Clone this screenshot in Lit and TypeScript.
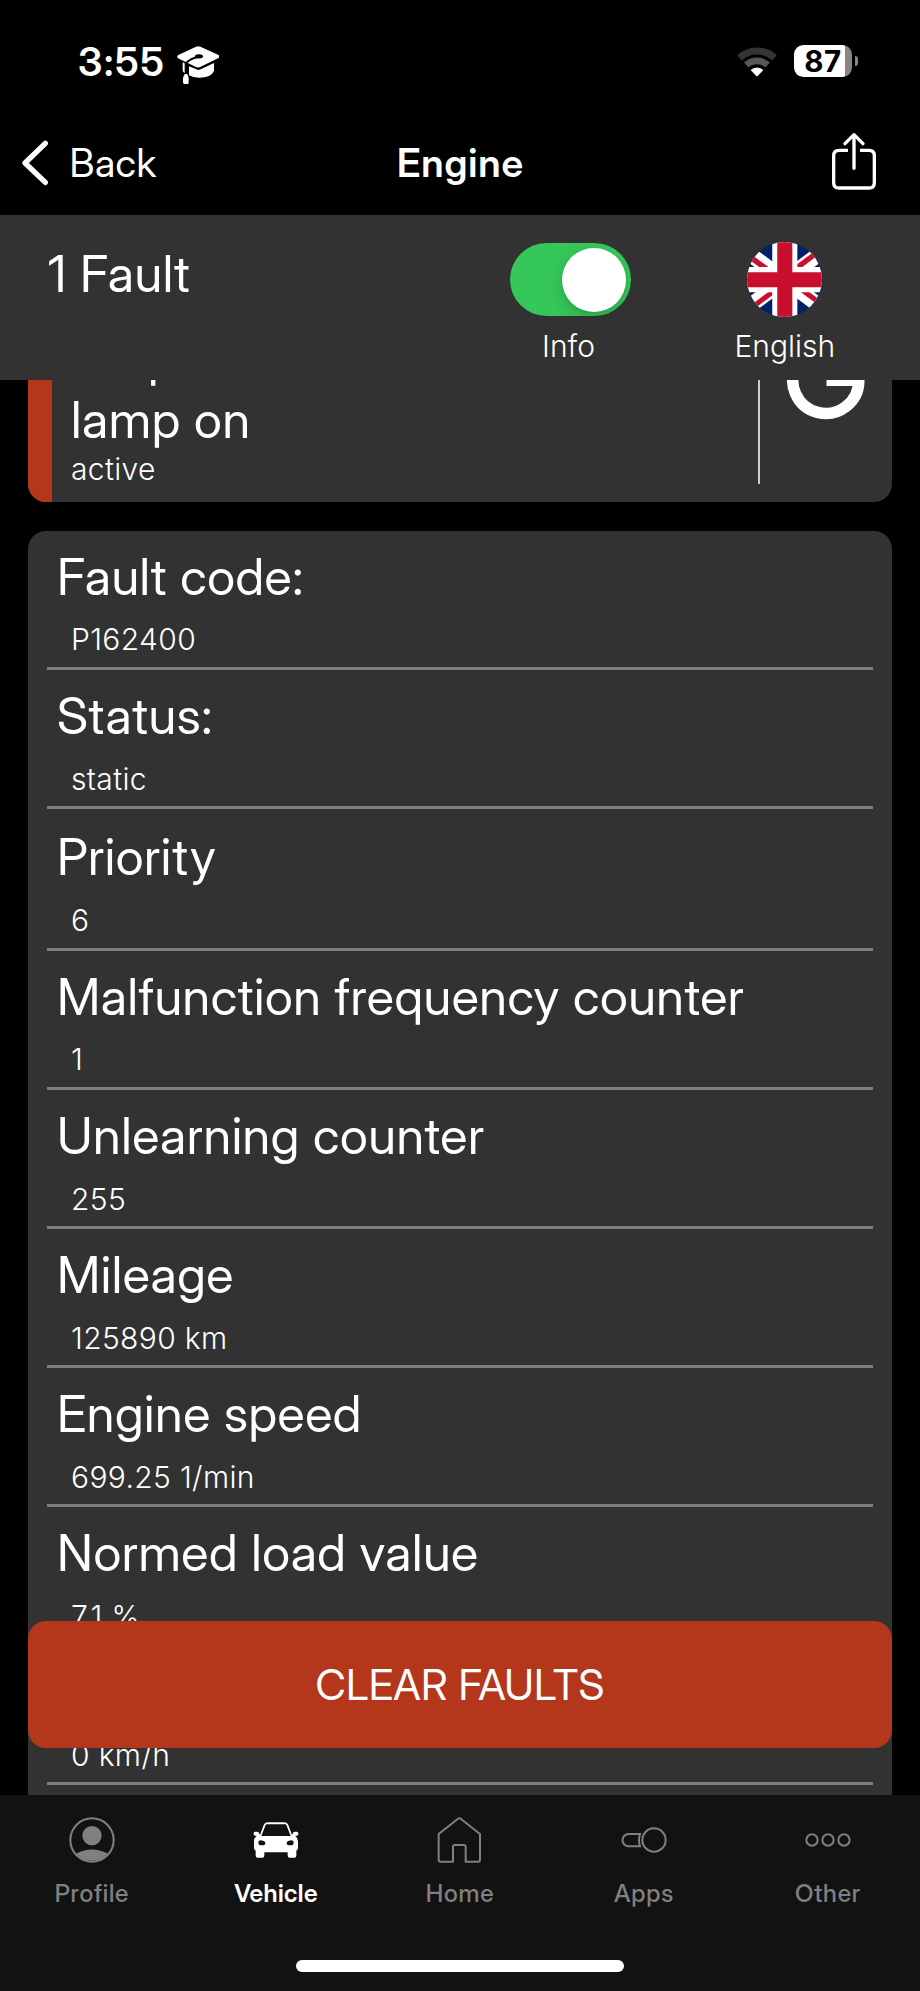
import { LitElement, html, svg, css } from 'lit';
import { customElement, property } from 'lit/decorators.js';
import { classMap } from 'lit/directives/class-map.js';

type TabName = 'Profile' | 'Vehicle' | 'Home' | 'Apps' | 'Other';

interface Detail {
  title: string;
  value: string;
  loose?: boolean;
}

const DETAILS: Detail[] = [
  { title: 'Fault code:', value: 'P162400' },
  { title: 'Status:', value: 'static' },
  { title: 'Priority', value: '6', loose: true },
  { title: 'Malfunction frequency counter', value: '1' },
  { title: 'Unlearning counter', value: '255' },
  { title: 'Mileage', value: '125890 km' },
  { title: 'Engine speed', value: '699.25 1/min' },
  { title: 'Normed load value', value: '7.1 %' },
  { title: '', value: '0 km/h' },
];

const TABS: TabName[] = ['Profile', 'Vehicle', 'Home', 'Apps', 'Other'];

const TAB_ICONS = {
  Profile: svg`
    <circle r="65" fill="none" stroke="currentColor" stroke-width="6"/>
    <circle cy="-13" r="29" fill="currentColor"/>
    <path d="M-48 42C-22 24 22 24 48 42C35 56 18 62 0 62S-35 56 -48 42Z" fill="currentColor"/>`,
  Vehicle: svg`
    <path fill="currentColor" fill-rule="evenodd" d="M-48 -15L-37 -45Q-34 -53 -26 -53H26Q34 -53 37 -45L48 -15Q51 -25 57 -25H62Q67 -25 67 -20V-17Q67 -13 62 -13H58Q66 -6 66 4V24Q66 29 61 32V47Q61 53 55 53H41Q35 53 35 47V37H-35V47Q-35 53 -41 53H-55Q-61 53 -61 47V32Q-66 29 -66 24V4Q-66 -6 -58 -13H-62Q-67 -13 -67 -17V-20Q-67 -25 -62 -25H-57Q-51 -25 -48 -15ZM-27 -47Q-31 -47 -32 -43L-44 -12H44L32 -43Q31 -47 27 -47ZM-53 9Q-53 16 -46 16H-38Q-32 16 -32 10Q-32 3 -39 2L-46 1Q-53 1 -53 9ZM53 9Q53 1 46 1L39 2Q32 3 32 10Q32 16 38 16H46Q53 16 53 9Z"/>`,
  Home: svg`
    <path transform="translate(-2 0)" fill="none" stroke="currentColor" stroke-width="6" stroke-linejoin="round" d="M-19 65H-56Q-62 65 -62 59V-18L-4 -64Q0 -67 4 -64L62 -18V59Q62 65 56 65H19V20Q19 15 14 15H-14Q-19 15 -19 20Z"/>`,
  Apps: svg`
    <g fill="none" stroke="currentColor" stroke-width="6">
      <circle cx="30" r="35"/>
      <path d="M-12 -18H-46A18.5 18.5 0 0 0 -46 19H-12Q-18 0 -12 -18Z"/>
    </g>`,
  Other: svg`
    <g fill="none" stroke="currentColor" stroke-width="6">
      <circle cx="-48" r="17"/><circle r="17"/><circle cx="48" r="17"/>
    </g>`,
};

@customElement('status-bar')
class StatusBar extends LitElement {
  static styles = css`
    :host { display: flex; height: 123px; justify-content: space-between; box-sizing: border-box; padding: 38px 62px 0 78px; }
    .left, .right { display: flex; align-items: flex-start; }
    .time { font-family: "Inter Display", Inter, sans-serif; font-weight: 600; font-size: 39.5px; line-height: 48px; letter-spacing: 1.9px; width: 98.7px; }
    .cap { width: 42.7px; height: 38.7px; margin-top: 7.5px; }
    .wifi { width: 40px; height: 30.7px; margin: 8px 17px 0 0; }
    .battery { margin-top: 6.7px; width: 58.7px; height: 32.3px; border-radius: 9.5px; background: linear-gradient(90deg, #fff 51px, #868686 51px); color: #000; font-weight: 700; font-size: 29.5px; line-height: 32.6px; letter-spacing: .4px; text-align: center; }
    .nub { width: 3.2px; height: 9.5px; border-radius: 0 5px 5px 0; background: #868686; margin: 18px 0 0 2.6px; }
  `;
  render() {
    return html`
      <div class="left">
        <span class="time">3:55</span>
        <svg class="cap" viewBox="0 0 128 116">
          <path fill="#fff" d="M57 2Q63 -1 70 2L123 26Q131 31 123 37L71 62Q64 66 57 63L6 38Q-4 33 4 27Z"/>
          <path fill="#fff" d="M36 61L58 70Q64 73 71 70L111 51V74Q104 94 66 95Q48 95 36 88ZM17 49L23 52V81Q17 78 17 72Z"/>
          <path fill="none" stroke="#000" stroke-width="6" d="M66 32Q40 37 27 51V90"/>
          <ellipse cx="66" cy="31" rx="12" ry="6.5"/>
          <path fill="#fff" d="M23 84H31L35 95V108Q35 116 27 116T18 108V95Z"/>
        </svg>
      </div>
      <div class="right">
        <svg class="wifi" viewBox="-60 -92 120 92">
          <path fill="none" stroke="#343434" stroke-width="21" d="M-52.5 -56.500A77 77 0 0 1 52.5 -56.500"/>
          <path fill="none" stroke="#575757" stroke-width="20" d="M-32 -35A47.500 47.500 0 0 1 32 -35"/>
          <path fill="#fff" d="M-19 -20A27.500 27.500 0 0 1 19 -20L3 -3Q0 0 -3 -3Z"/>
        </svg>
        <div class="battery">87</div>
        <div class="nub"></div>
      </div>
    `;
  }
}

@customElement('nav-bar')
class NavBar extends LitElement {
  static styles = css`
    :host { display: grid; grid-template-columns: 1fr auto 1fr; height: 92px; box-sizing: border-box; padding: 0 43px 0 20px; font-family: "Inter Display", Inter, sans-serif; font-size: 39px; line-height: 48px; }
    .back { display: flex; }
    .chevron { width: 30px; height: 48px; margin-top: 15.500px; }
    .label { margin: 16px 0 0 19.500px; letter-spacing: .5px; }
    .title { margin: 16px 0 0 24px; font-weight: 600; letter-spacing: .9px; }
    .share { justify-self: end; width: 46px; height: 60px; margin-top: 9px; }
  `;
  render() {
    return html`
      <div class="back">
        <svg class="chevron" viewBox="60 416 90 144"><path fill="none" stroke="#fff" stroke-width="16" stroke-linecap="round" stroke-linejoin="round" d="M136 429L75 488L136 546"/></svg>
        <span class="label">Back</span>
      </div>
      <span class="title">Engine</span>
      <svg class="share" viewBox="1111 396 138 180">
        <g fill="none" stroke="#fff" stroke-width="10">
          <path d="M1162 451H1135Q1119 451 1119 467V548Q1119 564 1135 564H1225Q1241 564 1241 548V467Q1241 451 1225 451H1198"/>
          <path stroke-linecap="round" stroke-linejoin="round" d="M1180 505V405M1153 431L1180 404L1207 431"/>
        </g>
      </svg>
    `;
  }
}

@customElement('fault-header')
class FaultHeader extends LitElement {
  static styles = css`
    :host { display: grid; grid-template-columns: 462px 121px 1fr; height: 165px; box-sizing: border-box; padding: 27px 0 0 48px; background: #323232; }
    .count { font-family: "Inter Display", Inter, sans-serif; font-size: 50.5px; line-height: 62px; letter-spacing: .55px; margin-top: 1px; }
    .switch { display: flex; justify-content: flex-end; box-sizing: border-box; height: 73.300px; border-radius: 37px; background: #35c759; padding: 5px; margin-top: 1px; overflow: hidden; }
    .knob { width: 64px; height: 64px; border-radius: 50%; background: #fff; box-shadow: 0 6px 16px rgba(0, 0, 0, .16), 0 2px 3px rgba(0, 0, 0, .06); }
    .caption { font-weight: 300; font-size: 30px; line-height: 36px; text-align: center; }
    .info { margin: 11.500px 4px 0 0; }
    .language { display: flex; flex-direction: column; align-items: center; width: 168px; margin-left: 69.800px; }
    .flag { width: 75.300px; height: 75.300px; border-radius: 50%; }
    .english { margin-top: 11px; }
  `;
  render() {
    return html`
      <div class="count">1 Fault</div>
      <div>
        <div class="switch"><div class="knob"></div></div>
        <div class="caption info">Info</div>
      </div>
      <div class="language">
        <svg class="flag" viewBox="80 0 480 480">
          <path fill="#012169" d="M0 0h640v480H0z"/>
          <path fill="#fff" d="m75 0 244 181L562 0h78v62L400 241l240 178v61h-80L320 301 81 480H0v-60l239-178L0 64V0z"/>
          <path fill="#c8102e" d="m424 281 216 159v40L369 281zm-184 20 6 35L54 480H0zM640 0v3L391 191l2-44L590 0zM0 0l239 176h-60L0 42z"/>
          <path fill="#fff" d="M241 0v480h160V0zM0 160v160h640V160z"/>
          <path fill="#c8102e" d="M0 193v96h640v-96zM273 0v480h96V0z"/>
        </svg>
        <div class="caption english">English</div>
      </div>
    `;
  }
}

@customElement('fault-card')
class FaultCard extends LitElement {
  static styles = css`
    :host { display: flex; height: 182.3px; border-radius: 18px; overflow: hidden; background: #323232; }
    .stripe { width: 24px; background: #b4371c; }
    .text { flex: 1; padding: 7.200px 0 0 19px; }
    .line { font-family: "Inter Display", Inter, sans-serif; font-size: 50.5px; line-height: 62px; letter-spacing: .6px; }
    .clipped { padding-left: 77px; }
    .state { font-weight: 300; font-size: 30px; line-height: 36px; letter-spacing: .35px; }
    .rule { width: 2.5px; height: 164px; background: #cfcfcf; }
    .logo { width: 80px; height: 80px; margin: 20px 26px 0 26px; }
  `;
  render() {
    return html`
      <div class="stripe"></div>
      <div class="text">
        <div class="line clipped">p</div>
        <div class="line">lamp on</div>
        <div class="state">active</div>
      </div>
      <div class="rule"></div>
      <svg class="logo" viewBox="-40 -40 80 80">
        <path fill="none" stroke="#fff" stroke-width="11.5" d="M23 -23A33 33 0 1 0 32.800 0.300H0.500"/>
      </svg>
    `;
  }
}

@customElement('detail-row')
class DetailRow extends LitElement {
  @property() title = '';
  @property() value = '';
  static styles = css`
    :host { display: block; box-sizing: border-box; height: 139.150px; padding-top: 15.100px; border-bottom: 3px solid #7e7e7e; }
    :host(.loose) { height: 141.700px; padding-top: 17.300px; }
    .title { height: 62px; padding-left: 10px; font-family: "Inter Display", Inter, sans-serif; font-size: 50.5px; line-height: 62px; letter-spacing: .54px; }
    .value { margin-top: 13.800px; padding-left: 24px; font-weight: 300; font-size: 30px; line-height: 36px; letter-spacing: .35px; }
  `;
  render() {
    return html`<div class="title">${this.title}</div><div class="value">${this.value}</div>`;
  }
}

@customElement('tab-bar')
class TabBar extends LitElement {
  static styles = css`
    :host { display: flex; flex-direction: column; align-items: center; height: 196px; background: #121212; }
    .tabs { display: grid; grid-template-columns: repeat(5, 1fr); width: 100%; padding-top: 21.800px; height: 143.200px; }
    .tab { display: flex; flex-direction: column; align-items: center; color: #808080; font-family: "Inter Display", Inter, sans-serif; font-size: 24.5px; line-height: 30px; font-weight: 500; letter-spacing: .8px; }
    .active { color: #fff; font-weight: 600; letter-spacing: .4px; }
    .icon { width: 46px; height: 46px; margin-bottom: 15.700px; overflow: visible; }
    .indicator { width: 328.500px; height: 12px; border-radius: 6px; background: #fff; }
  `;
  render() {
    return html`
      <div class="tabs">
        ${TABS.map(name => html`
          <div class=${classMap({ tab: true, active: name === 'Vehicle' })}>
            <svg class="icon" viewBox="-69 -69 138 138">${TAB_ICONS[name]}</svg>
            <span>${name}</span>
          </div>
        `)}
      </div>
      <div class="indicator"></div>
    `;
  }
}

@customElement('app-root')
class AppRoot extends LitElement {
  static styles = css`
    :host { display: flex; flex-direction: column; height: 1991px; width: 920px; overflow: hidden; background: #000; color: #fff; font-family: Inter, sans-serif; }
    .viewport { position: relative; height: 1415px; overflow: hidden; padding: 0 28px; }
    .fault { margin-top: -60px; }
    .details { margin-top: 28.300px; padding: 0 19px 60px; border-radius: 18px; background: #323232; }
    .clear { position: absolute; left: 28px; right: 28px; bottom: 47.200px; height: 127px; border: 0; padding: 0; border-radius: 18px; background: #b4371c; color: #fff; font: 400 42px/127px "Inter Display", Inter, sans-serif; letter-spacing: .25px; text-align: center; }
  `;
  render() {
    return html`
      <status-bar></status-bar>
      <nav-bar></nav-bar>
      <fault-header></fault-header>
      <main class="viewport">
        <fault-card class="fault"></fault-card>
        <section class="details">
          ${DETAILS.map(d => html`<detail-row class=${classMap({ loose: !!d.loose })} .title=${d.title} .value=${d.value}></detail-row>`)}
        </section>
        <button class="clear">CLEAR FAULTS</button>
      </main>
      <tab-bar></tab-bar>
    `;
  }
}
